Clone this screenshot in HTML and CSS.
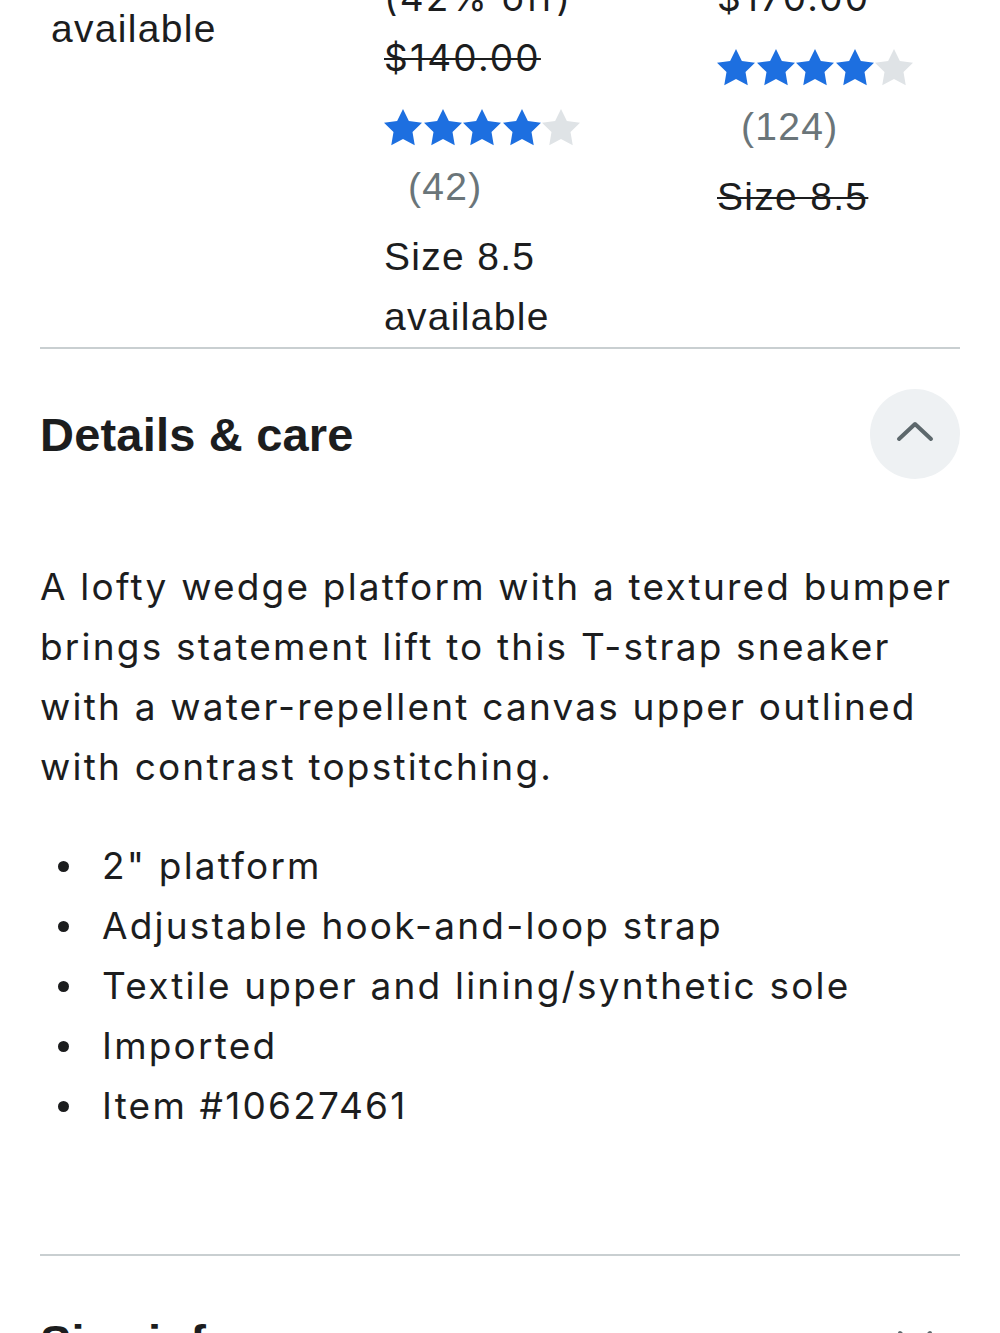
FILE: index.html
```html
<!DOCTYPE html>
<html lang="en">
<head>
    <meta charset="UTF-8">
    <meta name="viewport" content="width=device-width, initial-scale=1.0">
    <title>Wedge Platform Sneaker</title>
    <link rel="stylesheet" href="styles.css">
</head>
<body>
    <div class="page">
        <!-- Size comparison strip -->
        <div class="compare">
            <div class="col col-first">
                <p class="line">Size 8.5</p>
                <p class="line">available</p>
            </div>

            <div class="col">
                <p class="line price">$81.20</p>
                <p class="line price">(42% off)</p>
                <p class="line price was">$140.00</p>
                <div class="stars" aria-label="4 out of 5 stars">
                    <svg viewBox="2 2 20 20"><polygon class="on" points="12 2 15.09 8.26 22 9.27 17 14.14 18.18 21.02 12 17.77 5.82 21.02 7 14.14 2 9.27 8.91 8.26"/></svg>
                    <svg viewBox="2 2 20 20"><polygon class="on" points="12 2 15.09 8.26 22 9.27 17 14.14 18.18 21.02 12 17.77 5.82 21.02 7 14.14 2 9.27 8.91 8.26"/></svg>
                    <svg viewBox="2 2 20 20"><polygon class="on" points="12 2 15.09 8.26 22 9.27 17 14.14 18.18 21.02 12 17.77 5.82 21.02 7 14.14 2 9.27 8.91 8.26"/></svg>
                    <svg viewBox="2 2 20 20"><polygon class="on" points="12 2 15.09 8.26 22 9.27 17 14.14 18.18 21.02 12 17.77 5.82 21.02 7 14.14 2 9.27 8.91 8.26"/></svg>
                    <svg viewBox="2 2 20 20"><polygon class="off" points="12 2 15.09 8.26 22 9.27 17 14.14 18.18 21.02 12 17.77 5.82 21.02 7 14.14 2 9.27 8.91 8.26"/></svg>
                </div>
                <p class="line count">(42)</p>
                <p class="line size">Size 8.5</p>
                <p class="line">available</p>
            </div>

            <div class="col">
                <p class="line price">$98.00 &ndash;</p>
                <p class="line price">$170.00</p>
                <div class="stars" aria-label="4 out of 5 stars">
                    <svg viewBox="2 2 20 20"><polygon class="on" points="12 2 15.09 8.26 22 9.27 17 14.14 18.18 21.02 12 17.77 5.82 21.02 7 14.14 2 9.27 8.91 8.26"/></svg>
                    <svg viewBox="2 2 20 20"><polygon class="on" points="12 2 15.09 8.26 22 9.27 17 14.14 18.18 21.02 12 17.77 5.82 21.02 7 14.14 2 9.27 8.91 8.26"/></svg>
                    <svg viewBox="2 2 20 20"><polygon class="on" points="12 2 15.09 8.26 22 9.27 17 14.14 18.18 21.02 12 17.77 5.82 21.02 7 14.14 2 9.27 8.91 8.26"/></svg>
                    <svg viewBox="2 2 20 20"><polygon class="on" points="12 2 15.09 8.26 22 9.27 17 14.14 18.18 21.02 12 17.77 5.82 21.02 7 14.14 2 9.27 8.91 8.26"/></svg>
                    <svg viewBox="2 2 20 20"><polygon class="off" points="12 2 15.09 8.26 22 9.27 17 14.14 18.18 21.02 12 17.77 5.82 21.02 7 14.14 2 9.27 8.91 8.26"/></svg>
                </div>
                <p class="line count">(124)</p>
                <p class="line size was">Size 8.5</p>
            </div>
        </div>

        <!-- Details & care -->
        <section class="panel">
            <div class="panel-head">
                <h2>Details &amp; care</h2>
                <button type="button" class="toggle open" aria-label="Collapse">
                    <svg viewBox="0 0 90 90"><polyline points="29 50 45 35 61 50"/></svg>
                </button>
            </div>
            <div class="panel-body">
                <p class="desc">A lofty wedge platform with a textured bumper brings statement lift to this T-strap sneaker with a water-repellent canvas upper outlined with contrast topstitching.</p>
                <ul class="facts">
                    <li>2" platform</li>
                    <li>Adjustable hook-and-loop strap</li>
                    <li>Textile upper and lining/synthetic sole</li>
                    <li>Imported</li>
                    <li>Item #10627461</li>
                </ul>
            </div>
        </section>

        <!-- Size info -->
        <section class="panel">
            <div class="panel-head">
                <h2>Size info</h2>
                <button type="button" class="toggle" aria-label="Expand">
                    <svg viewBox="0 0 90 90"><polyline points="30 37 45 52 60 37"/></svg>
                </button>
            </div>
        </section>
    </div>
</body>
</html>
```

FILE: styles.css
```css
/* Base */
body {
    margin: 0;
    font-family: "Liberation Sans", Arial, sans-serif;
    color: #1c1d1e;
    background: #fff;
    overflow: hidden;
}

p {
    margin: 0;
}

.page {
    padding: 0 40px;
}

/* Size comparison strip (page is scrolled part way down) */
.compare {
    display: grid;
    grid-template-columns: 293px 293px 1fr;
    column-gap: 40px;
    align-items: start;
    padding-left: 11px;
    margin-top: -92px;
    border-bottom: 2px solid #c9cfd1;
}

.col-first {
    margin-top: 31px;
}

.line {
    font-size: 39px;
    line-height: 60px;
    letter-spacing: 1.3px;
    white-space: nowrap;
}

.price {
    font-family: "Inter", "Liberation Sans", sans-serif;
    font-size: 37px;
    letter-spacing: 2.2px;
}

.was {
    text-decoration: line-through;
    text-decoration-thickness: 2px;
}

.count {
    color: #6a7579;
    padding-left: 24px;
}

.size {
    margin-top: 10px;
}

/* Rating stars */
.stars {
    display: flex;
    align-items: center;
    gap: 1.5px;
    height: 58px;
    margin-top: 11px;
}

.stars svg {
    width: 38px;
    height: 38px;
}

.stars .on {
    fill: #1d6fe0;
}

.stars .off {
    fill: #dfe3e6;
}

/* Accordion panels */
.panel {
    border-bottom: 2px solid #c9cfd1;
}

.panel-head {
    display: flex;
    justify-content: space-between;
    align-items: center;
    padding-top: 40px;
}

.panel-head h2 {
    margin: 0;
    font-size: 47px;
    font-weight: 700;
    letter-spacing: 0.2px;
}

.toggle {
    width: 90px;
    height: 90px;
    border: none;
    border-radius: 50%;
    background: transparent;
    padding: 0;
    cursor: pointer;
}

.toggle.open {
    background: #eef1f3;
}

.toggle svg {
    display: block;
    width: 90px;
    height: 90px;
    fill: none;
    stroke: #5d686c;
    stroke-width: 4;
    stroke-linecap: round;
    stroke-linejoin: round;
}

.panel-body {
    padding: 78px 0 118px;
    font-family: "Inter", "Liberation Sans", sans-serif;
    font-size: 37px;
    line-height: 60px;
    letter-spacing: 2.2px;
}

.desc {
    margin-bottom: 39px;
}

.facts {
    margin: 0;
    padding: 0;
    list-style: none;
}

.facts li {
    display: flex;
    align-items: center;
}

.facts li::before {
    content: "";
    flex: none;
    width: 11px;
    height: 11px;
    border-radius: 50%;
    background: #1c1d1e;
    margin: 0 33px 0 18px;
}
```
